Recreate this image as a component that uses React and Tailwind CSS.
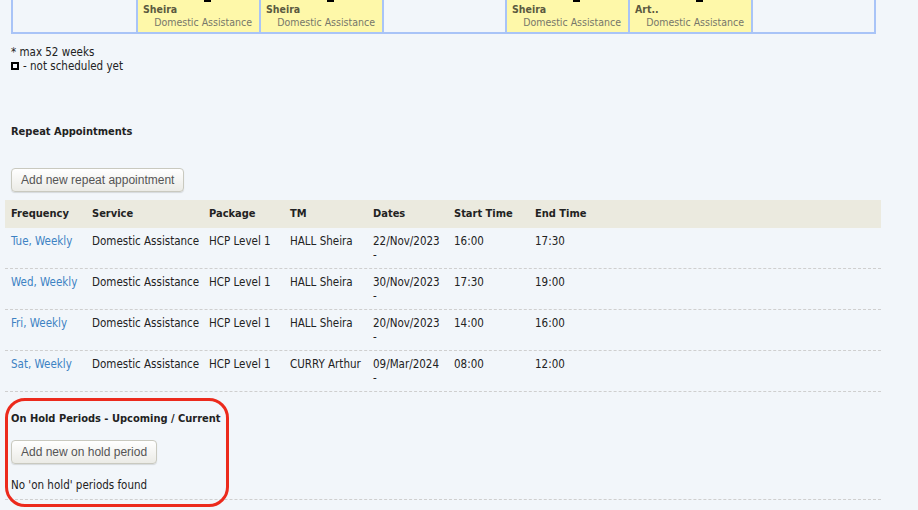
import React from 'react';

const cal = [
    null,
    { name: 'Sheira', service: 'Domestic Assistance' },
    { name: 'Sheira', service: 'Domestic Assistance' },
    null,
    { name: 'Sheira', service: 'Domestic Assistance' },
    { name: 'Art..', service: 'Domestic Assistance' },
    null,
];

const rows = [
    { freq: 'Tue, Weekly', service: 'Domestic Assistance', pkg: 'HCP Level 1', tm: 'HALL Sheira', date: '22/Nov/2023', start: '16:00', end: '17:30' },
    { freq: 'Wed, Weekly', service: 'Domestic Assistance', pkg: 'HCP Level 1', tm: 'HALL Sheira', date: '30/Nov/2023', start: '17:30', end: '19:00' },
    { freq: 'Fri, Weekly', service: 'Domestic Assistance', pkg: 'HCP Level 1', tm: 'HALL Sheira', date: '20/Nov/2023', start: '14:00', end: '16:00' },
    { freq: 'Sat, Weekly', service: 'Domestic Assistance', pkg: 'HCP Level 1', tm: 'CURRY Arthur', date: '09/Mar/2024', start: '08:00', end: '12:00' },
];

const cols = 'grid grid-cols-[81px_117px_81px_83px_81px_81px_1fr]';

function Btn({ children }) {
    return (
        <button className="h-[24px] px-[9px] rounded-[4px] border border-[#c9c9bf] bg-gradient-to-b from-white to-[#ebebe6] shadow-[0_1px_1px_rgba(0,0,0,0.12)] text-[12px] text-[#555] font-['Liberation_Sans',Arial,sans-serif]">
            {children}
        </button>
    );
}

export default function App() {
    return (
        <div className="min-h-screen bg-[#f2f6fa] text-[#222] text-[11.5px] leading-[14px] font-['DejaVu_Sans_Condensed','DejaVu_Sans',sans-serif] pl-[5px] pb-4">
            {/* calendar strip (bottom of the week grid) */}
            <div className="ml-[6px] w-[865px] h-[34px] overflow-hidden flex flex-col justify-end">
                <div className="grid grid-cols-7 border-x-2 border-b-2 border-[#a9c4f7]">
                    {cal.map((c, i) => (
                        <div
                            key={i}
                            className={`h-[60px] flex flex-col justify-end pb-[4px] ${i > 0 ? 'border-l-2 border-[#a9c4f7]' : ''} ${c ? 'bg-[#fef8a9]' : ''}`}
                        >
                            {c && (
                                <>
                                    <div className="pl-[66px]">
                                        <span className="block w-[7px] h-[8px] border-2 border-black" />
                                    </div>
                                    <div className="pl-[5px] pt-[1px] font-bold text-[10.5px] leading-[13px] text-[#5b5a40]">{c.name}</div>
                                    <div className="text-right pr-[7px] text-[10.5px] leading-[12px] text-[#77776a]">{c.service}</div>
                                </>
                            )}
                        </div>
                    ))}
                </div>
            </div>

            <div className="pl-[6px] mt-[11px]">
                <div>* max 52 weeks</div>
                <div className="flex items-center gap-[4px]">
                    <span className="block w-[8px] h-[8px] border-2 border-black" />
                    <span>- not scheduled yet</span>
                </div>
            </div>

            <div className="pl-[6px] mt-[52px] font-bold text-[11px]">Repeat Appointments</div>

            <div className="pl-[6px] mt-[29px]">
                <Btn>Add new repeat appointment</Btn>
            </div>

            <div className="relative w-[876px] mt-[8px]">
                <div className={`${cols} h-[28px] items-center bg-[#ebeadf] font-bold text-[11px]`}>
                    {['Frequency', 'Service', 'Package', 'TM', 'Dates', 'Start Time', 'End Time'].map((h) => (
                        <div key={h} className="pl-[6px]">{h}</div>
                    ))}
                </div>
                {rows.map((r) => (
                    <div key={r.freq} className={`${cols} h-[41px] pt-[6px] border-b border-dashed border-[#cfcfcf]`}>
                        <div className="pl-[6px] text-[#3d82c3]">{r.freq}</div>
                        <div className="pl-[6px]">{r.service}</div>
                        <div className="pl-[6px]">{r.pkg}</div>
                        <div className="pl-[6px]">{r.tm}</div>
                        <div className="pl-[6px]">
                            <div>{r.date}</div>
                            <div>-</div>
                        </div>
                        <div className="pl-[6px]">{r.start}</div>
                        <div className="pl-[6px]">{r.end}</div>
                    </div>
                ))}

                <div className="relative">
                    <div className="pl-[6px] pt-[20px] font-bold text-[11px]">On Hold Periods - Upcoming / Current</div>
                    <div className="pl-[6px] mt-[14px]">
                        <Btn>Add new on hold period</Btn>
                    </div>
                    <div className="pl-[6px] mt-[14px] pb-[7px] border-b border-dashed border-[#cfcfcf]">No 'on hold' periods found</div>
                    {/* highlight annotation */}
                    <div className="absolute left-0 top-[6px] w-[224px] h-[109px] rounded-[20px] border-[3px] border-[#ec2a1c] pointer-events-none" />
                </div>
            </div>
        </div>
    );
}
